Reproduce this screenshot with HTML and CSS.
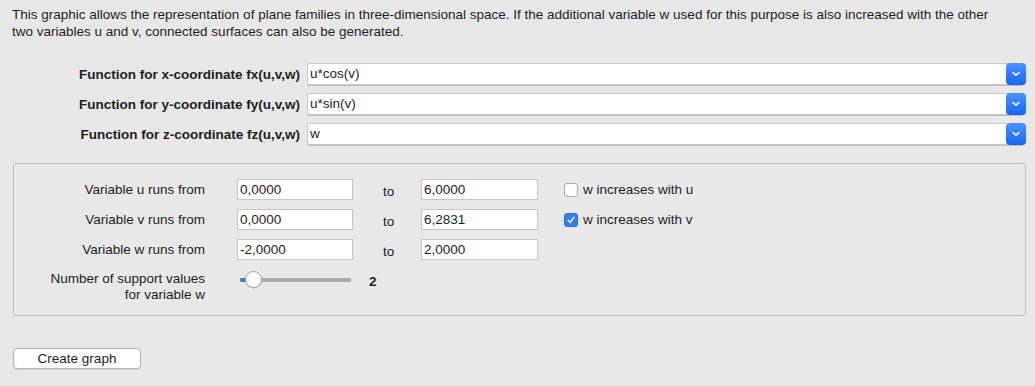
FILE: index.html
```html
<!DOCTYPE html>
<html lang="en">
<head>
  <meta charset="UTF-8">
  <meta name="viewport" content="width=device-width, initial-scale=1.0">
  <title>Plane families</title>
  <link rel="stylesheet" href="styles.css">
</head>
<body>
  <p class="intro">This graphic allows the representation of plane families in three-dimensional space. If the additional variable w used for this purpose is also increased with the other two variables u and v, connected surfaces can also be generated.</p>

  <div class="functions">
    <label class="fn-label">Function for x-coordinate fx(u,v,w)</label>
    <div class="combo"><span class="combo-text">u*cos(v)</span><span class="combo-btn"><svg width="10" height="6" viewBox="0 0 10 6"><path d="M2 1.5 L5 4.2 L8 1.5" fill="none" stroke="#fff" stroke-width="1.6" stroke-linecap="round" stroke-linejoin="round"/></svg></span></div>

    <label class="fn-label">Function for y-coordinate fy(u,v,w)</label>
    <div class="combo"><span class="combo-text">u*sin(v)</span><span class="combo-btn"><svg width="10" height="6" viewBox="0 0 10 6"><path d="M2 1.5 L5 4.2 L8 1.5" fill="none" stroke="#fff" stroke-width="1.6" stroke-linecap="round" stroke-linejoin="round"/></svg></span></div>

    <label class="fn-label">Function for z-coordinate fz(u,v,w)</label>
    <div class="combo"><span class="combo-text">w</span><span class="combo-btn"><svg width="10" height="6" viewBox="0 0 10 6"><path d="M2 1.5 L5 4.2 L8 1.5" fill="none" stroke="#fff" stroke-width="1.6" stroke-linecap="round" stroke-linejoin="round"/></svg></span></div>
  </div>

  <div class="panel">
    <div class="var-label">Variable u runs from</div>
    <div class="field">0,0000</div>
    <div class="to">to</div>
    <div class="field">6,0000</div>
    <div class="check"><span class="box"></span>w increases with u</div>

    <div class="var-label">Variable v runs from</div>
    <div class="field">0,0000</div>
    <div class="to">to</div>
    <div class="field">6,2831</div>
    <div class="check"><span class="box checked"><svg width="10" height="10" viewBox="0 0 10 10"><path d="M2.3 5.3 L4.2 7.4 L7.8 2.4" fill="none" stroke="#fff" stroke-width="1.5" stroke-linecap="round" stroke-linejoin="round"/></svg></span>w increases with v</div>

    <div class="var-label">Variable w runs from</div>
    <div class="field">-2,0000</div>
    <div class="to">to</div>
    <div class="field">2,0000</div>
    <div></div>

    <div class="var-label multi">Number of support values<br>for variable w</div>
    <div class="slider-cell">
      <div class="slider">
        <div class="track-fill"></div>
        <div class="knob"></div>
      </div>
      <span class="slider-value">2</span>
    </div>
  </div>

  <button class="create-btn">Create graph</button>
</body>
</html>
```

FILE: styles.css
```css
* {
  box-sizing: border-box;
  margin: 0;
  padding: 0;
}

body {
  background-color: #e8e8e8;
  font-family: "Liberation Sans", Arial, sans-serif;
  font-size: 13.5px;
  color: #1e1e1e;
  width: 1035px;
  height: 386px;
  overflow: hidden;
}

.intro {
  padding: 6px 30px 0 12px;
  line-height: 17px;
  width: 1035px;
}

.functions {
  display: grid;
  grid-template-columns: 288px 719px;
  column-gap: 7px;
  row-gap: 8px;
  padding-left: 12px;
  margin-top: 23px;
  align-items: center;
}

.fn-label {
  font-weight: bold;
  text-align: right;
  font-size: 13.5px;
  white-space: nowrap;
}

.combo {
  display: flex;
  height: 22px;
  background: #fff;
  border: 1px solid #c9c9c9;
  border-right: none;
  border-radius: 2px 5px 5px 2px;
  box-shadow: 0 1px 0 #bcbcbc;
}

.combo-text {
  flex: 1;
  padding: 2px 2px;
  font-size: 13.5px;
  line-height: 16px;
}

.combo-btn {
  width: 20px;
  margin: -1px 0 -1px 0;
  border-radius: 4px;
  background: linear-gradient(#4b94ff, #1566f4);
  display: flex;
  align-items: center;
  justify-content: center;
}

.panel {
  margin: 18px 9px 0 13px;
  height: 153px;
  border: 1px solid #bdbdbd;
  border-radius: 3px;
  background: #e9e9e9;
  padding: 15px 0 0 0;
  display: grid;
  grid-template-columns: 191px 148px 68px 117px auto;
  grid-auto-rows: 21px;
  row-gap: 9px;
  align-items: center;
}

.var-label {
  text-align: right;
  width: 223px;
  justify-self: start;
  margin-left: -32px;
  white-space: nowrap;
}

.var-label.multi {
  line-height: 16px;
  align-self: start;
  margin-top: 2px;
}

.field {
  height: 21px;
  background: #fff;
  border: 1px solid #c5c5c5;
  padding: 2px 2px;
  line-height: 16px;
}

.var-label + .field {
  margin-left: 32px;
  width: 116px;
}

.to {
  padding-left: 30px;
  padding-top: 3px;
}

.check {
  display: flex;
  align-items: center;
  gap: 5px;
  padding-left: 26px;
}

.box {
  width: 14px;
  height: 14px;
  border: 1px solid #a9a9a9;
  border-radius: 3px;
  background: #fff;
  display: flex;
  align-items: center;
  justify-content: center;
}

.box.checked {
  background: #2f7ff6;
  border-color: #2a74e6;
}

.slider-cell {
  grid-column: 2 / span 2;
  display: flex;
  align-items: center;
  padding-left: 35px;
  align-self: start;
  margin-top: 1px;
}

.slider {
  position: relative;
  width: 111px;
  height: 17px;
  display: flex;
  align-items: center;
  background: linear-gradient(#acacac, #acacac) no-repeat 0 center / 111px 4px;
  border-radius: 2px;
}

.track-fill {
  width: 8px;
  height: 4px;
  background: #2f7ff6;
  border-radius: 2px;
}

.knob {
  position: absolute;
  left: 5px;
  top: 0;
  width: 17px;
  height: 17px;
  border-radius: 50%;
  background: #fff;
  border: 1px solid #a8a8a8;
  box-shadow: 0 0.5px 1px rgba(0, 0, 0, 0.2);
}

.slider-value {
  font-weight: bold;
  margin-left: 18px;
  margin-top: 4px;
}

.create-btn {
  margin: 32px 0 0 13px;
  width: 128px;
  height: 21px;
  background: #fff;
  border: 1px solid #b4b4b4;
  border-radius: 4px;
  font-family: "Liberation Sans", Arial, sans-serif;
  font-size: 13.5px;
  color: #1e1e1e;
  box-shadow: 0 0.5px 1px rgba(0, 0, 0, 0.1);
}
```
